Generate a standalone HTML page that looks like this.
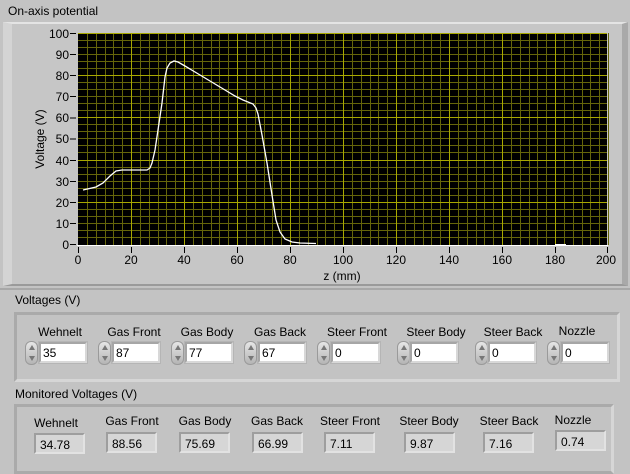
<!DOCTYPE html>
<html><head><style>
*{margin:0;padding:0;box-sizing:border-box}
body{width:630px;height:463px;background:#c3c3c3;font-family:"Liberation Sans",sans-serif;position:relative;overflow:hidden;color:#000}
.a{position:absolute}
.t{font-size:12px;white-space:nowrap}
.lab{position:absolute;font-size:12px;white-space:nowrap;text-align:center;width:80px}
.in{position:absolute;height:21px;background:#fff;border:2px solid #a6a6a6;border-right-color:#d8d8d8;border-bottom-color:#d8d8d8;font-size:12px;padding:2px 0 0 2px;box-shadow:0 0 0 1px #b5b5b5}
.sp{position:absolute;width:13px;height:24px;border-radius:6px;background:linear-gradient(#e6e6e6,#b4b4b4);border:1px solid #9a9a9a}
.sp:before{content:"";position:absolute;left:3px;top:3px;border-left:3px solid transparent;border-right:3px solid transparent;border-bottom:5px solid #777}
.sp:after{content:"";position:absolute;left:3px;bottom:3px;border-left:3px solid transparent;border-right:3px solid transparent;border-top:5px solid #777}
.ind{position:absolute;height:21px;background:#d6d6d6;border:2px solid #9e9e9e;border-right-color:#e2e2e2;border-bottom-color:#e2e2e2;font-size:12px;padding:3px 0 0 4px}
.ax{font-size:12px;fill:#000;font-family:"Liberation Sans",sans-serif}
</style></head><body>
<div class="a t" style="left:8px;top:4px">On-axis potential</div>
<div class="a" style="left:3px;top:22px;width:625px;height:264px;background:#c6c6c6;border-top:2px solid #e4e4e4;border-left:9px solid #d4d4d4;border-right:6px solid #a9a9a9;border-bottom:2px solid #9a9a9a"></div>
<svg class="a" style="left:0;top:0" width="630" height="290">
<rect x="78" y="33" width="529" height="212" fill="#000"/>
<g stroke="#66660a" stroke-width="1" shape-rendering="crispEdges" fill="none">
<path d="M87.5 33v212m9 -212v212m9-212v212m8-212v212m9-212v212m9-212v212M140.5 33v212m9 -212v212m9-212v212m8-212v212m9-212v212m9-212v212M193.5 33v212m9 -212v212m9-212v212m8-212v212m9-212v212m9-212v212M246.5 33v212m9 -212v212m9-212v212m8-212v212m9-212v212m9-212v212M299.5 33v212m9 -212v212m9-212v212m8-212v212m9-212v212m9-212v212M352.5 33v212m9 -212v212m9-212v212m8-212v212m9-212v212m9-212v212M405.5 33v212m9 -212v212m9-212v212m8-212v212m9-212v212m9-212v212M458.5 33v212m9 -212v212m9-212v212m8-212v212m9-212v212m9-212v212M511.5 33v212m9 -212v212m9-212v212m8-212v212m9-212v212m9-212v212M564.5 33v212m9 -212v212m9-212v212m8-212v212m9-212v212m9-212v212"/>
<path d="M78 40.5h529m-529 7h529m-529 7h529m-529 7h529m-529 7h529M78 82.5h529m-529 7h529m-529 7h529m-529 7h529m-529 7h529M78 124.5h529m-529 7h529m-529 7h529m-529 7h529m-529 7h529M78 167.5h529m-529 7h529m-529 7h529m-529 7h529m-529 7h529M78 209.5h529m-529 7h529m-529 7h529m-529 7h529m-529 7h529"/>
</g>
<g stroke="#a8a800" stroke-width="1" shape-rendering="crispEdges">
<path d="M131.5 33V245M184.5 33V245M237.5 33V245M290.5 33V245M343.5 33V245M396.5 33V245M449.5 33V245M502.5 33V245M555.5 33V245"/>
<path d="M78 75.5H607M78 117.5H607M78 160.5H607M78 202.5H607M78 33.5H607"/>
</g>
<path d="M83 190 L96 187 L103 183 L110 176 L116 171 L122 170 L147 170 L150 168 L152 163 L155 150 L158 130 L162 103 L165 77 L167 68 L170 63 L174 61 L178 62 L185 66 L195 72 L210 81 L225 90 L235 96 L243 100 L253 104 L256 108 L258 114 L262 135 L267 163 L272 195 L276 220 L280 232 L285 239 L292 242 L300 243 L316 243.5" fill="none" stroke="#fff" stroke-width="1.3"/>
<path d="M555 244.5H566" stroke="#fff"/>
<rect x="77" y="245" width="531" height="1" fill="#fff"/>
<g stroke="#000" stroke-width="1" shape-rendering="crispEdges">
<path d="M70 33.5H76M70 54.5H76M70 75.5H76M70 96.5H76M70 118H76M70 139H76M70 160.5H76M70 181.5H76M70 202.5H76M70 223.5H76M70 244.5H76"/>
<path d="M78.5 247V253M131.5 247V253M184.5 247V253M237.5 247V253M290.5 247V253M343.5 247V253M396.5 247V253M449.5 247V253M502.5 247V253M555.5 247V253M607.5 247V253"/>
</g>
<g class="ax" text-anchor="end">
<text x="69" y="38">100</text><text x="69" y="59">90</text><text x="69" y="80">80</text><text x="69" y="101">70</text><text x="69" y="122">60</text><text x="69" y="143">50</text><text x="69" y="165">40</text><text x="69" y="186">30</text><text x="69" y="207">20</text><text x="69" y="228">10</text><text x="69" y="249">0</text>
</g>
<g class="ax" text-anchor="middle">
<text x="78" y="264">0</text><text x="131" y="264">20</text><text x="184" y="264">40</text><text x="237" y="264">60</text><text x="290" y="264">80</text><text x="343" y="264">100</text><text x="396" y="264">120</text><text x="449" y="264">140</text><text x="502" y="264">160</text><text x="555" y="264">180</text><text x="606" y="264">200</text>
<text x="342" y="280">z (mm)</text>
<text transform="translate(44 139) rotate(-90)">Voltage (V)</text>
</g>
</svg>
<div class="a" style="left:0;top:288px;width:630px;height:2px;background:#a8a8a8"></div>
<div class="a t" style="left:15px;top:293px">Voltages (V)</div>
<div class="a" style="left:14px;top:312px;width:606px;height:70px;border:3px solid #aaa;border-right-color:#d6d6d6;border-bottom-color:#d6d6d6;background:#c3c3c3"></div>
<div class="lab" style="left:20px;top:325px">Wehnelt</div>
<div class="lab" style="left:94px;top:325px">Gas Front</div>
<div class="lab" style="left:167px;top:325px">Gas Body</div>
<div class="lab" style="left:240px;top:325px">Gas Back</div>
<div class="lab" style="left:317px;top:325px">Steer Front</div>
<div class="lab" style="left:396px;top:325px">Steer Body</div>
<div class="lab" style="left:473px;top:325px">Steer Back</div>
<div class="lab" style="left:537px;top:324px">Nozzle</div>
<div class="sp" style="left:25px;top:341px"></div><div class="in" style="left:39px;top:342px;width:48px">35</div>
<div class="sp" style="left:98px;top:341px"></div><div class="in" style="left:112px;top:342px;width:48px">87</div>
<div class="sp" style="left:171px;top:341px"></div><div class="in" style="left:185px;top:342px;width:48px">77</div>
<div class="sp" style="left:244px;top:341px"></div><div class="in" style="left:258px;top:342px;width:48px">67</div>
<div class="sp" style="left:317px;top:341px"></div><div class="in" style="left:331px;top:342px;width:49px">0</div>
<div class="sp" style="left:397px;top:341px"></div><div class="in" style="left:410px;top:342px;width:48px">0</div>
<div class="sp" style="left:475px;top:341px"></div><div class="in" style="left:488px;top:342px;width:48px">0</div>
<div class="sp" style="left:547px;top:341px"></div><div class="in" style="left:561px;top:342px;width:48px">0</div>
<div class="a t" style="left:15px;top:387px">Monitored Voltages (V)</div>
<div class="a" style="left:14px;top:404px;width:600px;height:70px;border:3px solid #aaa;border-right-color:#d6d6d6;background:#c3c3c3"></div>
<div class="lab" style="left:16px;top:416px">Wehnelt</div>
<div class="lab" style="left:92px;top:414px">Gas Front</div>
<div class="lab" style="left:165px;top:414px">Gas Body</div>
<div class="lab" style="left:237px;top:414px">Gas Back</div>
<div class="lab" style="left:310px;top:414px">Steer Front</div>
<div class="lab" style="left:389px;top:414px">Steer Body</div>
<div class="lab" style="left:469px;top:414px">Steer Back</div>
<div class="lab" style="left:533px;top:413px">Nozzle</div>
<div class="ind" style="left:34px;top:433px;width:51px">34.78</div>
<div class="ind" style="left:106px;top:432px;width:51px">88.56</div>
<div class="ind" style="left:179px;top:432px;width:51px">75.69</div>
<div class="ind" style="left:252px;top:432px;width:51px">66.99</div>
<div class="ind" style="left:324px;top:432px;width:51px">7.11</div>
<div class="ind" style="left:404px;top:432px;width:51px">9.87</div>
<div class="ind" style="left:483px;top:432px;width:51px">7.16</div>
<div class="ind" style="left:555px;top:430px;width:51px">0.74</div>
</body></html>
